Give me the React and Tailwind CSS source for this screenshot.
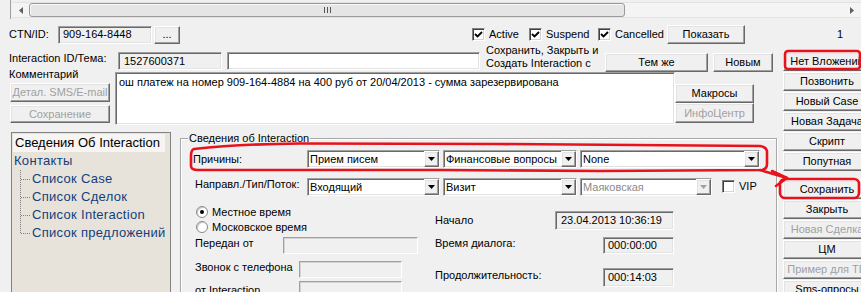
import React from "react";

const sunken =
  "border border-t-[#a0a0a0] border-l-[#a0a0a0] border-r-white border-b-white shadow-[inset_1px_1px_0_#696969,inset_-1px_-1px_0_#e3e3e3]";
const sunkenLight =
  "border border-t-[#a0a0a0] border-l-[#a0a0a0] border-r-white border-b-white shadow-[inset_1px_1px_0_#d4d4d4]";
const raised =
  "border border-t-white border-l-white border-r-[#696969] border-b-[#696969] shadow-[inset_-1px_-1px_0_#a0a0a0,inset_1px_1px_0_#e3e3e3]";

const Btn = ({ className = "", disabled, children }) => (
  <div
    className={`${raised} bg-[#f0f0f0] flex items-center justify-center whitespace-nowrap overflow-hidden shrink-0 ${
      disabled ? "text-[#a0a0a0]" : "text-black"
    } ${className}`}
  >
    {children}
  </div>
);

const Field = ({ className = "", white, light, children }) => (
  <div
    className={`${light ? sunkenLight : sunken} ${
      white ? "bg-white" : "bg-[#f0f0f0]"
    } flex items-center whitespace-nowrap overflow-hidden shrink-0 ${className}`}
  >
    {children}
  </div>
);

const Arrow = ({ color = "#000" }) => (
  <svg width="7" height="4" viewBox="0 0 7 4">
    <path d="M0 0H7L3.5 4Z" fill={color} />
  </svg>
);

const Combo = ({ className = "", disabled, children }) => (
  <div className={`${sunken} bg-white flex h-[18px] shrink-0 ${className}`}>
    <span
      className={`flex-1 pl-[2px] leading-[16px] whitespace-nowrap overflow-hidden ${
        disabled ? "text-[#8a8a8a]" : "text-black"
      }`}
    >
      {children}
    </span>
    <div className={`${raised} bg-[#f0f0f0] w-[15px] h-full flex items-center justify-center`}>
      <Arrow color={disabled ? "#a0a0a0" : "#000"} />
    </div>
  </div>
);

const Check = () => (
  <div className="w-[13px] h-[13px] bg-white border border-t-[#808080] border-l-[#808080] border-r-white border-b-white shadow-[inset_1px_1px_0_#404040,inset_-1px_-1px_0_#d4d4d4] flex items-center justify-center shrink-0">
    <svg width="9" height="9" viewBox="0 0 9 9">
      <path d="M1 4L3.5 6.5L8 2" stroke="#000" strokeWidth="1.9" fill="none" />
    </svg>
  </div>
);

const Radio = ({ on }) => (
  <div className="w-[12px] h-[12px] rounded-full bg-white border border-[#8a8a8a] shadow-[inset_1px_1px_0_#c8c8c8] flex items-center justify-center shrink-0">
    {on && <div className="w-[4px] h-[4px] rounded-full bg-black" />}
  </div>
);

const TreeRow = ({ last, children }) => (
  <div className="flex h-[18px] items-center">
    <svg width="20" height="18" className="shrink-0">
      <line x1="8.5" y1="0" x2="8.5" y2={last ? 9 : 18} stroke="#808080" strokeDasharray="1 1" />
      <line x1="9" y1="9.5" x2="19" y2="9.5" stroke="#808080" strokeDasharray="1 1" />
    </svg>
    <span className="leading-[18px] whitespace-nowrap tracking-[0.3px]">{children}</span>
  </div>
);

export default function App() {
  return (
    <div className="w-[861px] h-[292px] overflow-hidden bg-[#f0f0f0] relative font-['Liberation_Sans',Arial,sans-serif] text-[11px] text-black">
      {/* scrollbar */}
      <div className="h-[19px] flex">
        <div className="w-[10px]" />
        <div className="border-l border-[#a0a0a0] h-full w-[2px]" />
        <div className="flex-1 flex h-[16px] mt-[2px] bg-[#f4f4f4] border-y border-[#e2e2e2]">
          <div className="w-[17px] flex items-center justify-center">
            <svg width="4" height="7" viewBox="0 0 4 7">
              <path d="M4 0V7L0 3.5Z" fill="#606060" />
            </svg>
          </div>
          <div className="w-[596px] h-full rounded-[3px] border border-[#9a9a9a] bg-[#e5e5e5] shadow-[inset_1px_1px_0_#f8f8f8] flex items-center justify-center gap-[2px]">
            <div className="w-px h-[6px] bg-[#555]" />
            <div className="w-px h-[6px] bg-[#555]" />
            <div className="w-px h-[6px] bg-[#555]" />
          </div>
          <div className="flex-1" />
          <div className="w-[18px] flex items-center justify-center">
            <svg width="4" height="7" viewBox="0 0 4 7">
              <path d="M0 0V7L4 3.5Z" fill="#606060" />
            </svg>
          </div>
        </div>
      </div>

      {/* row A */}
      <div className="flex items-center h-[19px] mt-[6px]">
        <div className="pl-[9px] w-[58px]">CTN/ID:</div>
        <Field className="w-[94px] h-[18px] pl-[4px]">909-164-8448</Field>
        <Btn className="w-[26px] h-[18px] ml-[2px]">...</Btn>
        <div className="ml-[292px] w-[57px] flex items-center">
          <Check />
          <span className="ml-[4px]">Active</span>
        </div>
        <div className="w-[69px] flex items-center">
          <Check />
          <span className="ml-[4px]">Suspend</span>
        </div>
        <div className="w-[69px] flex items-center">
          <Check />
          <span className="ml-[4px]">Cancelled</span>
        </div>
        <Btn className="w-[78px] h-[19px]">Показать</Btn>
        <div className="ml-[92px]">1</div>
      </div>

      <div className="flex mt-[8px]">
        {/* left part */}
        <div className="w-[778px] shrink-0">
          {/* row B */}
          <div className="flex items-start h-[18px]">
            <div className="pl-[9px] w-[118px] leading-[12px] whitespace-nowrap">Interaction ID/Тема:</div>
            <Field className="w-[104px] h-[18px] pl-[5px]">1527600371</Field>
            <Field white className="w-[253px] h-[18px] ml-[5px]" />
            <div className="ml-[6px] w-[119px] leading-[13px] -mt-[8px] whitespace-nowrap">
              <div>Сохранить, Закрыть и</div>
              <div>Создать Interaction с</div>
            </div>
            <Btn className="w-[103px] h-[19px] mt-[1px]">Тем же</Btn>
            <Btn className="w-[60px] h-[19px] mt-[1px] ml-[5px]">Новым</Btn>
          </div>

          {/* row C */}
          <div className="flex h-[53px] mt-[2px]">
            <div className="w-[115px] pl-[10px] shrink-0">
              <div className="-mt-[3px] h-[11px] leading-[11px] -ml-px">Комментарий</div>
              <Btn disabled className="w-[100px] h-[19px] mt-[3px]">Детал. SMS/E-mail</Btn>
              <Btn disabled className="w-[100px] h-[18px] mt-[3px]">Сохранение</Btn>
            </div>
            <div className={`${sunken} bg-white w-[560px] h-[53px] pl-[3px] pt-[3px] leading-[13px] whitespace-nowrap overflow-hidden shrink-0`}>
              ош платеж на номер 909-164-4884 на 400 руб от 20/04/2013 - сумма зарезервирована
            </div>
            <div className="shrink-0">
              <Btn className="w-[79px] h-[19px] mt-[12px]">Макросы</Btn>
              <Btn disabled className="w-[79px] h-[20px]">ИнфоЦентр</Btn>
            </div>
          </div>

          {/* row D */}
          <div className="flex mt-[7px]">
            <div className="ml-[11px] w-[160px] h-[170px] border border-[#828282] bg-[#e7e3da] overflow-hidden text-[13px] text-[#123f7a] shrink-0">
              <div className="ml-px mt-px w-[152px] h-[18px] leading-[18px] pl-[2px] bg-[#f6f5f2] text-black whitespace-nowrap">
                Сведения Об Interaction
              </div>
              <div className="h-[18px] leading-[18px] pl-[2px] tracking-[0.3px]">Контакты</div>
              <TreeRow>Список Case</TreeRow>
              <TreeRow>Список Сделок</TreeRow>
              <TreeRow>Список Interaction</TreeRow>
              <TreeRow last>Список предложений</TreeRow>
            </div>

            <div className="ml-[9px] mt-[6px] w-[597px] h-[200px] relative border border-[#a8a8a8] shadow-[inset_1px_1px_0_white,1px_1px_0_white] shrink-0">
              <div className="absolute -top-[7px] left-[7px] px-px bg-[#f0f0f0] leading-[12px]">
                Сведения об Interaction
              </div>
              <div className="flex items-center mt-[11px]">
                <div className="pl-[12px] w-[126px] shrink-0">Причины:</div>
                <Combo className="w-[133px]">Прием писем</Combo>
                <Combo className="w-[134px] ml-[3px]">Финансовые вопросы</Combo>
                <Combo className="w-[180px] ml-[3px]">None</Combo>
              </div>
              <div className="flex items-start mt-[10px]">
                <div className="pl-[14px] w-[126px] shrink-0 leading-[13px] whitespace-nowrap">Направл./Тип/Поток:</div>
                <Combo className="w-[133px]">Входящий</Combo>
                <Combo className="w-[134px] ml-[3px]">Визит</Combo>
                <Combo disabled className="w-[132px] ml-[3px]">Маяковская</Combo>
                <div className="ml-[10px] flex items-center">
                  <div className="w-[13px] h-[13px] bg-white border border-t-[#808080] border-l-[#808080] border-r-white border-b-white shadow-[inset_1px_1px_0_#404040,inset_-1px_-1px_0_#d4d4d4]" />
                  <span className="ml-[4px]">VIP</span>
                </div>
              </div>

              <div className="flex">
                <div className="w-[254px] shrink-0">
                  <div className="flex items-center h-[14px] mt-[9px] pl-[15px]">
                    <Radio on />
                    <span className="ml-[4px]">Местное время</span>
                  </div>
                  <div className="flex items-center h-[14px] mt-px pl-[15px]">
                    <Radio />
                    <span className="ml-[4px]">Московское время</span>
                  </div>
                  <div className="flex items-start mt-[3px]">
                    <div className="pl-[14px] w-[102px] leading-[13px] shrink-0">Передан от</div>
                    <Field light className="w-[135px] h-[17px]" />
                  </div>
                  <div className="flex items-start mt-[7px]">
                    <div className="pl-[14px] w-[118px] leading-[13px] shrink-0 whitespace-nowrap">Звонок с телефона</div>
                    <Field light className="w-[103px] h-[17px]" />
                  </div>
                  <div className="flex items-start mt-[3px]">
                    <div className="pl-[14px] w-[118px] leading-[13px] mt-[3px] shrink-0">от Interaction</div>
                    <Field light className="w-[103px] h-[17px]" />
                  </div>
                </div>
                <div className="w-[239px] shrink-0">
                  <div className="flex items-center mt-[15px]">
                    <div className="w-[120px] shrink-0">Начало</div>
                    <Field className="w-[119px] h-[19px] pl-[5px]">23.04.2013 10:36:19</Field>
                  </div>
                  <div className="flex items-start mt-[7px]">
                    <div className="w-[168px] leading-[13px] shrink-0">Время диалога:</div>
                    <Field className="w-[71px] h-[17px] pl-[4px]">000:00:00</Field>
                  </div>
                  <div className="flex items-start mt-[14px]">
                    <div className="w-[168px] leading-[13px] mt-px shrink-0">Продолжительность:</div>
                    <Field className="w-[71px] h-[19px] pl-[4px]">000:14:03</Field>
                  </div>
                </div>
              </div>
            </div>
          </div>
        </div>

        {/* right column */}
        <div className="ml-[5px] flex flex-col gap-px">
          <Btn className="w-[88px] h-[19px]">Нет Вложений</Btn>
          <Btn className="w-[88px] h-[19px]">Позвонить</Btn>
          <Btn className="w-[88px] h-[19px]">Новый Case</Btn>
          <Btn className="w-[88px] h-[19px]">Новая Задача</Btn>
          <Btn className="w-[88px] h-[19px]">Скрипт</Btn>
          <Btn className="w-[88px] h-[19px]">Попутная</Btn>
          <Btn className="w-[88px] h-[19px] mt-[8px]">Сохранить</Btn>
          <Btn className="w-[88px] h-[19px]">Закрыть</Btn>
          <Btn disabled className="w-[88px] h-[19px]">Новая Сделка</Btn>
          <Btn className="w-[88px] h-[19px]">ЦМ</Btn>
          <Btn disabled className="w-[88px] h-[19px]">Пример для ТП</Btn>
          <Btn className="w-[88px] h-[19px]">Sms-опросы</Btn>
        </div>
      </div>

      {/* red hand-drawn marks */}
      <svg
        className="absolute inset-0 pointer-events-none"
        width="861"
        height="292"
        viewBox="0 0 861 292"
      >
        <g fill="none" stroke="#e8121c" strokeWidth="2.6" strokeLinecap="round" strokeLinejoin="round">
          <rect x="785" y="51" width="75" height="18" rx="3" />
          <path d="M194 149 Q191 150 191 156 L191 166 Q191 170 198 170 L440 170 L600 171 L762 170 Q767 169 767 164 L767 151 Q766 147 760 146 L500 144 L300 143.5 Q240 144 194 149 Z" />
          <path d="M760 170 L787 178" />
          <path d="M772 171 L787 178 L776 186" />
          <rect x="780" y="179" width="79" height="19" rx="5" />
        </g>
      </svg>
    </div>
  );
}
